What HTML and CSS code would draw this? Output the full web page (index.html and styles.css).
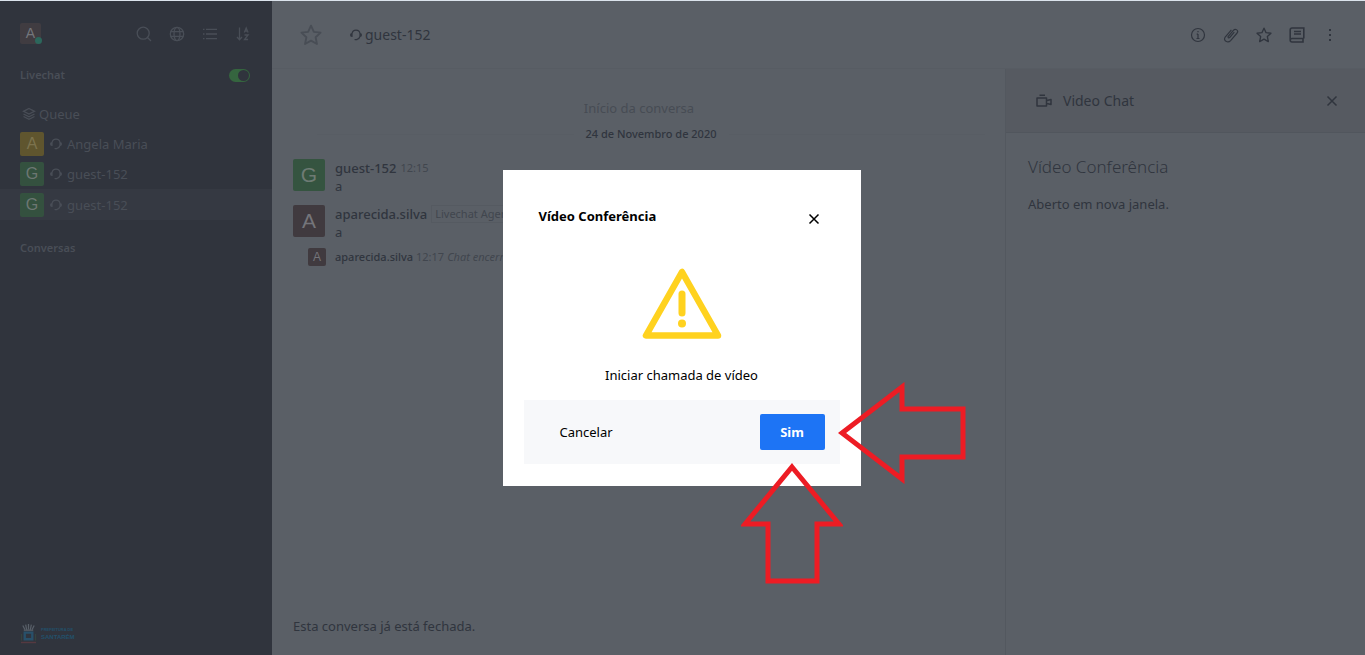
FILE: index.html
```html
<!DOCTYPE html>
<html lang="pt-BR">
<head>
<meta charset="utf-8">
<title>guest-152 - Livechat</title>
<link rel="stylesheet" href="styles.css">
</head>
<body>
<svg class="sprite" aria-hidden="true">
  <symbol id="headset" viewBox="0 0 12 12"><path d="M2 7.500C.8 7.500.6 6.700.6 6S1 4.700 2 4.600C2.400 2.400 4 1.200 6 1.200s3.700 1.300 4 3.400c1 .1 1.400.7 1.400 1.400S11 7.300 10 7.500C9.600 9 8.400 10.300 6.500 10.600M2 4.600v2.900M10 4.600v2.900M5 10.600h2" fill="none" stroke="currentColor" stroke-width="1.200" stroke-linecap="round"/></symbol>
  <symbol id="star" viewBox="0 0 20 20"><path d="M10 1.500l2.600 5.600 6.100.7-4.500 4.200 1.200 6.200-5.400-3.100-5.400 3.100L5.800 12 1.300 7.800l6.100-.7z" fill="none" stroke="currentColor" stroke-width="1.700" stroke-linejoin="round"/></symbol>
  <symbol id="cross" viewBox="0 0 12 12"><path d="M1.500 1.500l9 9M10.500 1.500l-9 9" fill="none" stroke="currentColor" stroke-width="1.500"/></symbol>
</svg>
<div class="app">
  <aside class="sidebar">
    <header class="side-head">
      <div class="me">A<span class="status"></span></div>
      <nav class="tools">
        <button aria-label="Buscar"><svg viewBox="0 0 16 16"><circle cx="7.200" cy="7.200" r="6"/><path d="M11.500 11.500l3.500 3.500"/></svg></button>
        <button aria-label="Diretório"><svg viewBox="0 0 16 16"><circle cx="8" cy="8" r="6.700"/><ellipse cx="8" cy="8" rx="3" ry="6.700"/><path d="M1.500 5.700h13M1.500 10.300h13"/></svg></button>
        <button aria-label="Visualização"><svg viewBox="0 0 16 16"><path d="M4 3.300h11M4 8h11M4 12.700h11M1 3.300h1.500M1 8h1.500M1 12.700h1.500"/></svg></button>
        <button aria-label="Ordenar"><svg viewBox="0 0 16 16"><path d="M4.500 1.500v12M2 11l2.500 2.700L7 11M9.300 6.500L11.200 2l1.900 4.500M10 5h2.500M9.500 9h3.600l-3.600 4.500h3.600"/></svg></button>
      </nav>
    </header>
    <div class="side-title"><label for="available">Livechat</label><input class="toggle" id="available" type="checkbox" checked></div>
    <nav class="rooms">
      <a class="room queue" href="#"><svg class="layers" viewBox="0 0 14 14"><path d="M7 1.500l5.500 2.800L7 7.100 1.500 4.300zM1.500 7L7 9.800 12.500 7M1.500 9.500L7 12.300l5.500-2.800"/></svg>Queue</a>
      <a class="room" href="#"><span class="ava gold">A</span><svg class="headset"><use href="#headset"/></svg>Angela Maria</a>
      <a class="room" href="#"><span class="ava green">G</span><svg class="headset"><use href="#headset"/></svg>guest-152</a>
      <a class="room active" href="#"><span class="ava green">G</span><svg class="headset"><use href="#headset"/></svg>guest-152</a>
    </nav>
    <h2 class="side-title second">Conversas</h2>
    <footer class="brand">
      <svg class="crest" viewBox="0 0 18 22"><path d="M3 2l2 4M6 1l1 5M9 .5V6M12 1l-1 5M15 2l-2 4M4 7h10" stroke="#596069" stroke-width="1.300"/><path d="M5 9.500h8v7H5z" fill="none" stroke="#28506a" stroke-width="2.500"/><path d="M1.500 11v7M16.500 11v7" stroke="#36473f"/><path d="M1 20h16" stroke="#553941" stroke-width="1.500"/></svg>
      <div class="brand-name"><span>PREFEITURA DE</span><strong>SANTARÉM</strong></div>
    </footer>
  </aside>
  <main class="main">
    <header class="room-head">
      <button class="fav" aria-label="Favorito"><svg><use href="#star"/></svg></button>
      <svg class="headset"><use href="#headset"/></svg>
      <h1>guest-152</h1>
      <nav class="actions">
        <button aria-label="Informações"><svg viewBox="0 0 16 16"><circle cx="8" cy="8" r="6.500"/><path d="M8 7v4.500M6.700 7.200H8M6.500 11.500h3M8 4v1.300"/></svg></button>
        <button aria-label="Arquivos"><svg viewBox="0 0 16 16"><path d="M11.300 5.200L6.700 10.500c-.8 1-2.200 0-1.400-1.100l5.300-6.200c1.900-2.200 5.300.4 3.500 2.800L7.600 13.600c-2.700 3-7.800.2-5.400-3.600L8.400 2.800"/></svg></button>
        <button aria-label="Mensagens favoritas"><svg><use href="#star"/></svg></button>
        <button aria-label="Contato"><svg viewBox="0 0 16 16"><path d="M14.800 11.500V1H3Q1.200 1 1.200 3v10Q1.200 15 3 15h11.800M14.800 11.500H3q-1.800 0-1.800 1.700M14 11.500V15M5 4.500h7M5 7h7" stroke-width="1.600"/></svg></button>
        <button aria-label="Mais"><svg viewBox="0 0 16 16"><path d="M8 2v2M8 7v2M8 12v2" stroke-width="2"/></svg></button>
      </nav>
    </header>
    <div class="body">
      <section class="chat">
        <p class="start">Início da conversa</p>
        <p class="day"><span>24 de Novembro de 2020</span></p>
        <article class="msg"><span class="ava big green">G</span><div><p class="meta"><b>guest-152</b><time>12:15</time></p><p>a</p></div></article>
        <article class="msg"><span class="ava big brown">A</span><div><p class="meta"><b>aparecida.silva</b><span class="role">Livechat Agent</span></p><p>a</p></div></article>
        <article class="msg system"><span class="ava small brown">A</span><p class="meta"><b>aparecida.silva</b><time>12:17</time><i>Chat encerrado</i></p></article>
        <p class="closed">Esta conversa já está fechada.</p>
      </section>
      <aside class="panel">
        <header class="panel-head">
          <svg class="cam" viewBox="0 0 18 16"><path d="M2 5h9.500v8H2zM12 7.500l4-1v5l-4-1M4.500 2.200h5.500" fill="none" stroke="currentColor" stroke-width="1.500" stroke-linejoin="round"/></svg>
          <h2>Video Chat</h2>
          <button aria-label="Fechar painel"><svg class="cross"><use href="#cross"/></svg></button>
        </header>
        <div class="panel-body"><h3>Vídeo Conferência</h3><p>Aberto em nova janela.</p></div>
      </aside>
    </div>
  </main>
</div>
<div class="overlay">
  <section class="modal" role="dialog" aria-modal="true" aria-labelledby="modal-title">
    <header class="modal-head"><h2 id="modal-title">Vídeo Conferência</h2><button aria-label="Fechar"><svg class="cross"><use href="#cross"/></svg></button></header>
    <svg class="warn" viewBox="0 0 80 72"><path d="M40 4L4 67.500h72z" fill="none" stroke="#ffd21f" stroke-width="6.500" stroke-linejoin="round"/><path d="M40 26v19" stroke="#ffd21f" stroke-width="7" stroke-linecap="round"/><circle cx="40" cy="55.500" r="4" fill="#ffd21f"/></svg>
    <p class="question">Iniciar chamada de vídeo</p>
    <footer class="modal-foot"><button class="cancel">Cancelar</button><button class="yes">Sim</button></footer>
    <svg class="arrow left" viewBox="0 0 128 102"><path d="M4 51L64 5V27H125V75H64V97z"/></svg>
    <svg class="arrow up" viewBox="0 0 102 122"><path d="M51 4L98 61H76V118H27V61H4z"/></svg>
  </section>
</div>
</body>
</html>
```
FILE: styles.css
```css
* { box-sizing: border-box; }
body { margin: 0; font: 13px/18px "Noto Sans", "Open Sans", sans-serif; color: #30353e; background: #5a5f66; }
h1, h2, h3, p { margin: 0; font-size: inherit; font-weight: inherit; }
button { padding: 0; border: 0; background: none; color: inherit; font: inherit; display: flex; align-items: center; justify-content: center; }
a { color: inherit; text-decoration: none; }
svg { display: block; flex: none; }
.sprite { position: absolute; width: 0; height: 0; }
.app { display: flex; min-height: 100vh; border-top: 1px solid #dbe3ec; }
.headset { width: 12px; height: 12px; }
.cross { width: 12px; height: 12px; }

.sidebar { width: 272px; flex: none; display: flex; flex-direction: column; background: #30343d; color: #494e57; }
.side-head { display: flex; justify-content: space-between; align-items: center; padding: 22px 21px 0 20px; }
.me { position: relative; width: 21px; height: 21px; border-radius: 2px; background: #403c41; color: #73767b; font: 14px/21px "Liberation Sans", sans-serif; text-align: center; }
.status { position: absolute; right: -1px; bottom: 0; width: 7px; height: 7px; border-radius: 50%; background: #2c675c; }
.tools { display: flex; gap: 17px; }
.tools svg { width: 16px; height: 16px; fill: none; stroke: currentColor; stroke-width: 1.3; }
.side-title { display: flex; justify-content: space-between; align-items: center; padding: 22px 22px 0 20px; font-size: 11px; font-weight: 600; }
.toggle { appearance: none; display: flex; justify-content: flex-end; width: 21px; height: 13px; margin: 0; padding: 1px; border-radius: 7px; background: #35653f; }
.toggle::before { content: ""; width: 11px; height: 11px; border-radius: 50%; background: #30343d; }
.rooms { padding-top: 15px; }
.room { display: flex; align-items: center; height: 30px; padding: 0 20px; gap: 5px; }
.room.queue { gap: 3px; }
.room .headset { margin-left: 1px; }
.room.active { height: 31px; background: #353942; }
.layers { width: 14px; height: 14px; margin-left: 2px; fill: none; stroke: currentColor; stroke-width: 1.3; }
.ava { flex: none; display: block; width: 24px; height: 24px; border-radius: 2px; font: 16px/24px "Liberation Sans", sans-serif; text-align: center; }
.rooms .ava { color: #6d7773; }
.rooms .gold { background: #5f552e; color: #7c734e; }
.rooms .green { background: #34513f; }
.second { padding-top: 19px; }
.brand { display: flex; align-items: center; gap: 4px; margin-top: auto; padding: 0 20px 10px; }
.crest { width: 17px; height: 22px; }
.brand-name { display: flex; flex-direction: column; color: #23506a; font-family: "Liberation Sans", sans-serif; font-weight: 700; }
.brand-name span { font-size: 4px; line-height: 6px; }
.brand-name strong { font-size: 6px; line-height: 8px; }

.main { flex: 1; min-width: 0; display: flex; flex-direction: column; }
.room-head { display: flex; align-items: center; height: 68px; padding: 0 27px 0 28px; border-bottom: 1px solid #575c63; }
.room-head h1 { font-size: 14px; margin-left: 3px; }
.fav { margin-right: 28px; color: #484d55; }
.fav svg { width: 22px; height: 22px; }
.actions { display: flex; gap: 17px; margin-left: auto; }
.actions svg { width: 16px; height: 16px; fill: none; stroke: currentColor; stroke-width: 1.2; }
.body { flex: 1; display: flex; }
.chat { flex: 1; min-width: 0; display: flex; flex-direction: column; padding: 30px 20px 20px 21px; }
.start { text-align: center; color: #474c54; }
.day { display: flex; align-items: center; gap: 12px; margin: 8px 0 16px 24px; font-size: 11px; font-weight: 500; }
.day::before, .day::after { content: ""; flex: 1; border-top: 1px solid #585d64; }
.msg { display: flex; gap: 10px; margin-bottom: 10px; }
.meta { display: flex; align-items: center; gap: 4px; white-space: nowrap; }
.meta b { font-weight: 500; }
.meta time, .meta i { font-size: 11px; color: #41464e; }
.role { padding: 0 3px; border: 1px solid #555a61; font-size: 11px; line-height: 16px; color: #41464e; }
.big { width: 32px; height: 32px; font-size: 21px; line-height: 32px; }
.small { width: 18px; height: 18px; font-size: 12px; line-height: 18px; }
.chat .green { background: #355440; color: #6e7b74; }
.chat .brown { background: #403a3f; color: #74757a; }
.system { gap: 9px; margin-top: -3px; padding-left: 15px; font-size: 11px; }
.system .meta { gap: 3px; }
.closed { margin-top: auto; }
.panel { width: 360px; flex: none; border-left: 1px solid #53585f; }
.panel-head { display: flex; align-items: center; height: 64px; padding: 0 27px 0 29px; background: #565a61; border-bottom: 1px solid #51565d; }
.panel-head h2 { font-size: 14px; margin-left: 10px; }
.panel-head button { margin-left: auto; }
.cam { width: 18px; height: 16px; }
.panel-body { padding: 22px; }
.panel-body h3 { font-size: 17px; line-height: 24px; font-weight: 300; margin-bottom: 16px; }

.overlay { position: fixed; inset: 0; display: flex; align-items: center; justify-content: center; padding-right: 2px; }
.modal { position: relative; display: flex; flex-direction: column; width: 358px; padding: 36px 21px 22px; background: #fff; color: #000; }
.modal-head { display: flex; justify-content: space-between; padding: 0 20px 0 15px; }
.modal-head h2 { line-height: 20px; font-weight: 700; }
.modal-head button { height: 26px; }
.warn { width: 80px; height: 72px; margin: 36px auto 26px; }
.question { text-align: center; }
.modal-foot { display: flex; justify-content: space-between; align-items: center; margin-top: 16px; padding: 14px 15px 14px 36px; background: #f7f8fa; }
.yes { width: 65px; height: 36px; border-radius: 2px; background: #1d74f5; color: #fff; font-weight: 700; }
.cancel { height: 36px; }
.arrow { position: absolute; fill: none; stroke: #ed1c24; stroke-width: 5; }
.left { left: 335px; top: 212px; width: 128px; height: 102px; }
.up { left: 238px; top: 293px; width: 102px; height: 122px; }
```
